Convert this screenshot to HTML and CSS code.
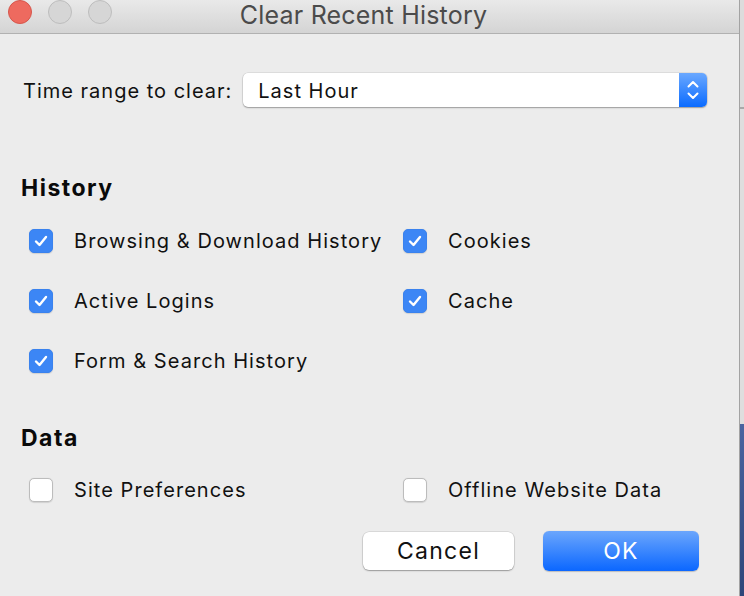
FILE: index.html
```html
<!DOCTYPE html>
<html lang="en">
<head>
<meta charset="utf-8">
<title>Clear Recent History</title>
<link rel="stylesheet" href="styles.css">
</head>
<body>
<div class="screen">
  <div class="window">
    <div class="titlebar">
      <div class="lights">
        <span class="light light-close"></span>
        <span class="light light-off"></span>
        <span class="light light-off"></span>
      </div>
      <div class="title">Clear Recent History</div>
      <div class="spacer"></div>
    </div>
    <div class="content">
      <div class="range-row">
        <span class="range-label">Time range to clear:</span>
        <div class="select">
          <span class="select-value">Last Hour</span>
          <span class="stepper">
            <svg width="14" height="22" viewBox="0 0 14 22"><path d="M2.5 7.5 L7 3 L11.5 7.5" fill="none" stroke="#fff" stroke-width="2" stroke-linecap="round" stroke-linejoin="round"/><path d="M2.5 14.5 L7 19 L11.5 14.5" fill="none" stroke="#fff" stroke-width="2" stroke-linecap="round" stroke-linejoin="round"/></svg>
          </span>
        </div>
      </div>

      <h2 class="heading heading-history">History</h2>
      <div class="options options-history">
        <label class="option"><span class="box checked"><svg width="14" height="12" viewBox="0 0 14 12"><path d="M2 6.5 L5.5 10 L12 2" fill="none" stroke="#fff" stroke-width="2.4" stroke-linecap="round" stroke-linejoin="round"/></svg></span><span class="text">Browsing &amp; Download History</span></label>
        <label class="option"><span class="box checked"><svg width="14" height="12" viewBox="0 0 14 12"><path d="M2 6.5 L5.5 10 L12 2" fill="none" stroke="#fff" stroke-width="2.4" stroke-linecap="round" stroke-linejoin="round"/></svg></span><span class="text">Cookies</span></label>
        <label class="option"><span class="box checked"><svg width="14" height="12" viewBox="0 0 14 12"><path d="M2 6.5 L5.5 10 L12 2" fill="none" stroke="#fff" stroke-width="2.4" stroke-linecap="round" stroke-linejoin="round"/></svg></span><span class="text">Active Logins</span></label>
        <label class="option"><span class="box checked"><svg width="14" height="12" viewBox="0 0 14 12"><path d="M2 6.5 L5.5 10 L12 2" fill="none" stroke="#fff" stroke-width="2.4" stroke-linecap="round" stroke-linejoin="round"/></svg></span><span class="text">Cache</span></label>
        <label class="option"><span class="box checked"><svg width="14" height="12" viewBox="0 0 14 12"><path d="M2 6.5 L5.5 10 L12 2" fill="none" stroke="#fff" stroke-width="2.4" stroke-linecap="round" stroke-linejoin="round"/></svg></span><span class="text">Form &amp; Search History</span></label>
      </div>

      <h2 class="heading heading-data">Data</h2>
      <div class="options options-data">
        <label class="option"><span class="box"></span><span class="text">Site Preferences</span></label>
        <label class="option"><span class="box"></span><span class="text">Offline Website Data</span></label>
      </div>

      <div class="buttons">
        <button class="btn btn-cancel">Cancel</button>
        <button class="btn btn-ok">OK</button>
      </div>
    </div>
  </div>
  <div class="desktop">
    <div class="desk-top"></div>
    <div class="desk-mid"></div>
    <div class="desk-blue"></div>
  </div>
</div>
</body>
</html>
```
FILE: styles.css
```css
* { box-sizing: border-box; }
html, body { margin: 0; padding: 0; }
body {
  width: 744px;
  height: 596px;
  overflow: hidden;
  font-family: Inter, "Liberation Sans", Arial, sans-serif;
  color: #111;
  background: #ececec;
}
.screen {
  display: flex;
  height: 596px;
}
.window {
  width: 740px;
  height: 596px;
  background: #ececec;
  border-right: 1px solid #a3a3a3;
  display: flex;
  flex-direction: column;
}
.titlebar {
  height: 34px;
  flex: none;
  display: grid;
  grid-template-columns: 1fr auto 1fr;
  align-items: start;
  background: linear-gradient(#e9e9e9, #d4d4d4);
  border-bottom: 1px solid #b1b1b1;
}
.lights {
  display: flex;
  gap: 16px;
  padding-left: 8px;
}
.light {
  width: 24px;
  height: 24px;
  border-radius: 50%;
  display: block;
}
.light-close {
  background: #ee6a5f;
  border: 1px solid #d6564c;
}
.light-off {
  background: #d6d6d6;
  border: 1px solid #bdbdbd;
}
.title {
  font-size: 25px;
  line-height: 30px;
  margin-top: 0;
  color: #4b4b4b;
  letter-spacing: 0.2px;
  margin-left: -12px;
}
.content {
  padding: 39px 40px 0 0;
  display: flex;
  flex-direction: column;
}
.range-row {
  display: flex;
  align-items: center;
  height: 34px;
  padding-left: 23px;
}
.range-label {
  font-size: 20px;
  letter-spacing: 1px;
  margin-right: 11px;
  margin-top: 1px;
  white-space: nowrap;
}
.select {
  width: 464px;
  flex: none;
  height: 34px;
  background: #fff;
  border-radius: 5px;
  box-shadow: 0 0 0 0.5px rgba(0,0,0,0.12), 0 1px 1.5px rgba(0,0,0,0.3);
  display: flex;
  align-items: center;
}
.select-value {
  flex: 1;
  font-size: 20px;
  letter-spacing: 1px;
  padding-left: 15px;
  margin-top: 1px;
}
.stepper {
  width: 28px;
  height: 34px;
  background: linear-gradient(#6aa8ff, #0a6bff);
  border-radius: 0 5px 5px 0;
  display: flex;
  align-items: center;
  justify-content: center;
}
.heading {
  margin: 0;
  font-size: 23px;
  font-weight: 700;
  letter-spacing: 1.5px;
  line-height: 24px;
  height: 24px;
  padding-left: 21px;
  color: #0a0a0a;
}
.heading-history { margin-top: 69px; }
.heading-data { margin-top: 53px; }
.options {
  display: grid;
  grid-template-columns: 374px auto;
  row-gap: 36px;
  padding-left: 29px;
}
.options-history { margin-top: 29px; }
.options-data { margin-top: 28px; }
.option {
  display: flex;
  align-items: center;
  height: 24px;
}
.box {
  width: 24px;
  height: 24px;
  border-radius: 5px;
  background: #fff;
  border: 1px solid #bcbcbc;
  box-shadow: 0 0.5px 1px rgba(0,0,0,0.12);
  flex: none;
  display: flex;
  align-items: center;
  justify-content: center;
}
.box.checked {
  background: #3c86f5;
  border-color: #3a82ee;
}
.text {
  font-size: 20px;
  letter-spacing: 1.05px;
  margin-left: 21px;
  color: #111;
  white-space: nowrap;
}
.buttons {
  display: flex;
  justify-content: flex-end;
  gap: 29px;
  margin-top: 29px;
}
.btn {
  font-family: inherit;
  font-size: 23px;
  letter-spacing: 1.3px;
  height: 40px;
  border: none;
  border-radius: 6px;
  padding: 0;
}
.btn-cancel {
  width: 151px;
  height: 38px;
  margin-top: 1px;
  background: #fff;
  color: #111;
  box-shadow: 0 0 0 0.5px rgba(0,0,0,0.15), 0 1px 1.5px rgba(0,0,0,0.3);
}
.btn-ok {
  width: 156px;
  background: linear-gradient(#6ba6fc, #0b67ff);
  color: #fff;
  box-shadow: 0 0.5px 1px rgba(0,0,0,0.2);
}
.desktop {
  flex: 1;
  display: flex;
  flex-direction: column;
}
.desk-top {
  height: 109px;
  background: #dcdcdc;
  border-bottom: 2px solid #a9a9a9;
}
.desk-mid {
  height: 315px;
  background: #dedede;
}
.desk-blue {
  flex: 1;
  background: linear-gradient(#4a64a0, #2d4579);
}
```
